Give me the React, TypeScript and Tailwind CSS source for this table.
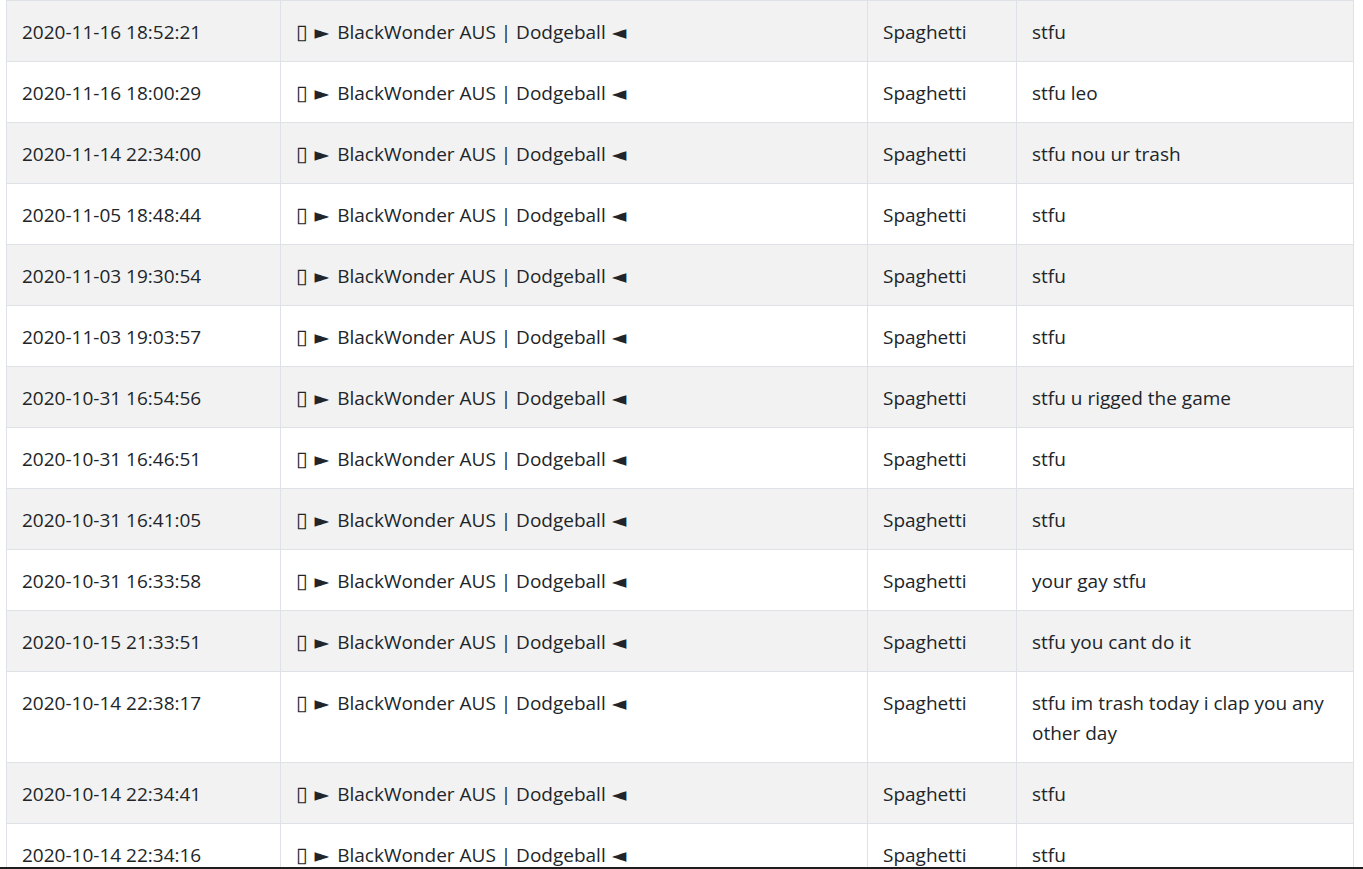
const rows = [
  { time: "2020-11-16 18:52:21", msg: "stfu" },
  { time: "2020-11-16 18:00:29", msg: "stfu leo" },
  { time: "2020-11-14 22:34:00", msg: "stfu nou ur trash" },
  { time: "2020-11-05 18:48:44", msg: "stfu" },
  { time: "2020-11-03 19:30:54", msg: "stfu" },
  { time: "2020-11-03 19:03:57", msg: "stfu" },
  { time: "2020-10-31 16:54:56", msg: "stfu u rigged the game" },
  { time: "2020-10-31 16:46:51", msg: "stfu" },
  { time: "2020-10-31 16:41:05", msg: "stfu" },
  { time: "2020-10-31 16:33:58", msg: "your gay stfu" },
  { time: "2020-10-15 21:33:51", msg: "stfu you cant do it" },
  { time: "2020-10-14 22:38:17", msg: "stfu im trash today i clap you any other day" },
  { time: "2020-10-14 22:34:41", msg: "stfu" },
  { time: "2020-10-14 22:34:16", msg: "stfu" },
];

const glyph = { fontFamily: '"DejaVu Sans", sans-serif' };

export default function App() {
  return (
    <div className="h-[869px] overflow-hidden flex flex-col bg-white">
      <div className="flex-1 overflow-hidden pl-[6px] pr-[10px]">
        <table
          className="w-[1347px] table-fixed border-collapse text-[19px] leading-[30px] text-[#212529]"
          style={{ fontFamily: '"Open Sans", "DejaVu Sans", sans-serif' }}
        >
          <colgroup>
            <col className="w-[274px]" />
            <col className="w-[587px]" />
            <col className="w-[149px]" />
            <col className="w-[337px]" />
          </colgroup>
          <tbody>
            {rows.map((r, i) => (
              <tr key={i} className={i % 2 === 0 ? "bg-[#f2f2f2]" : "bg-white"}>
                <td className="border border-[#dee2e6] px-[15px] pt-[16px] pb-[14px] align-top">{r.time}</td>
                <td className="border border-[#dee2e6] px-[15px] pt-[16px] pb-[14px] align-top">
                  <span style={glyph} className="text-[21px] leading-none">▯</span>
                  <span style={glyph} className="ml-[7px] mr-[8px] text-[19px] leading-none">►</span>
                  BlackWonder AUS | Dodgeball
                  <span style={glyph} className="ml-[6px] text-[19px] leading-none">◄</span>
                </td>
                <td className="border border-[#dee2e6] px-[15px] pt-[16px] pb-[14px] align-top">Spaghetti</td>
                <td className="border border-[#dee2e6] px-[15px] pt-[16px] pb-[14px] align-top">{r.msg}</td>
              </tr>
            ))}
          </tbody>
        </table>
      </div>
      <div className="h-[2px] bg-[#1e1e1e]" />
    </div>
  );
}
